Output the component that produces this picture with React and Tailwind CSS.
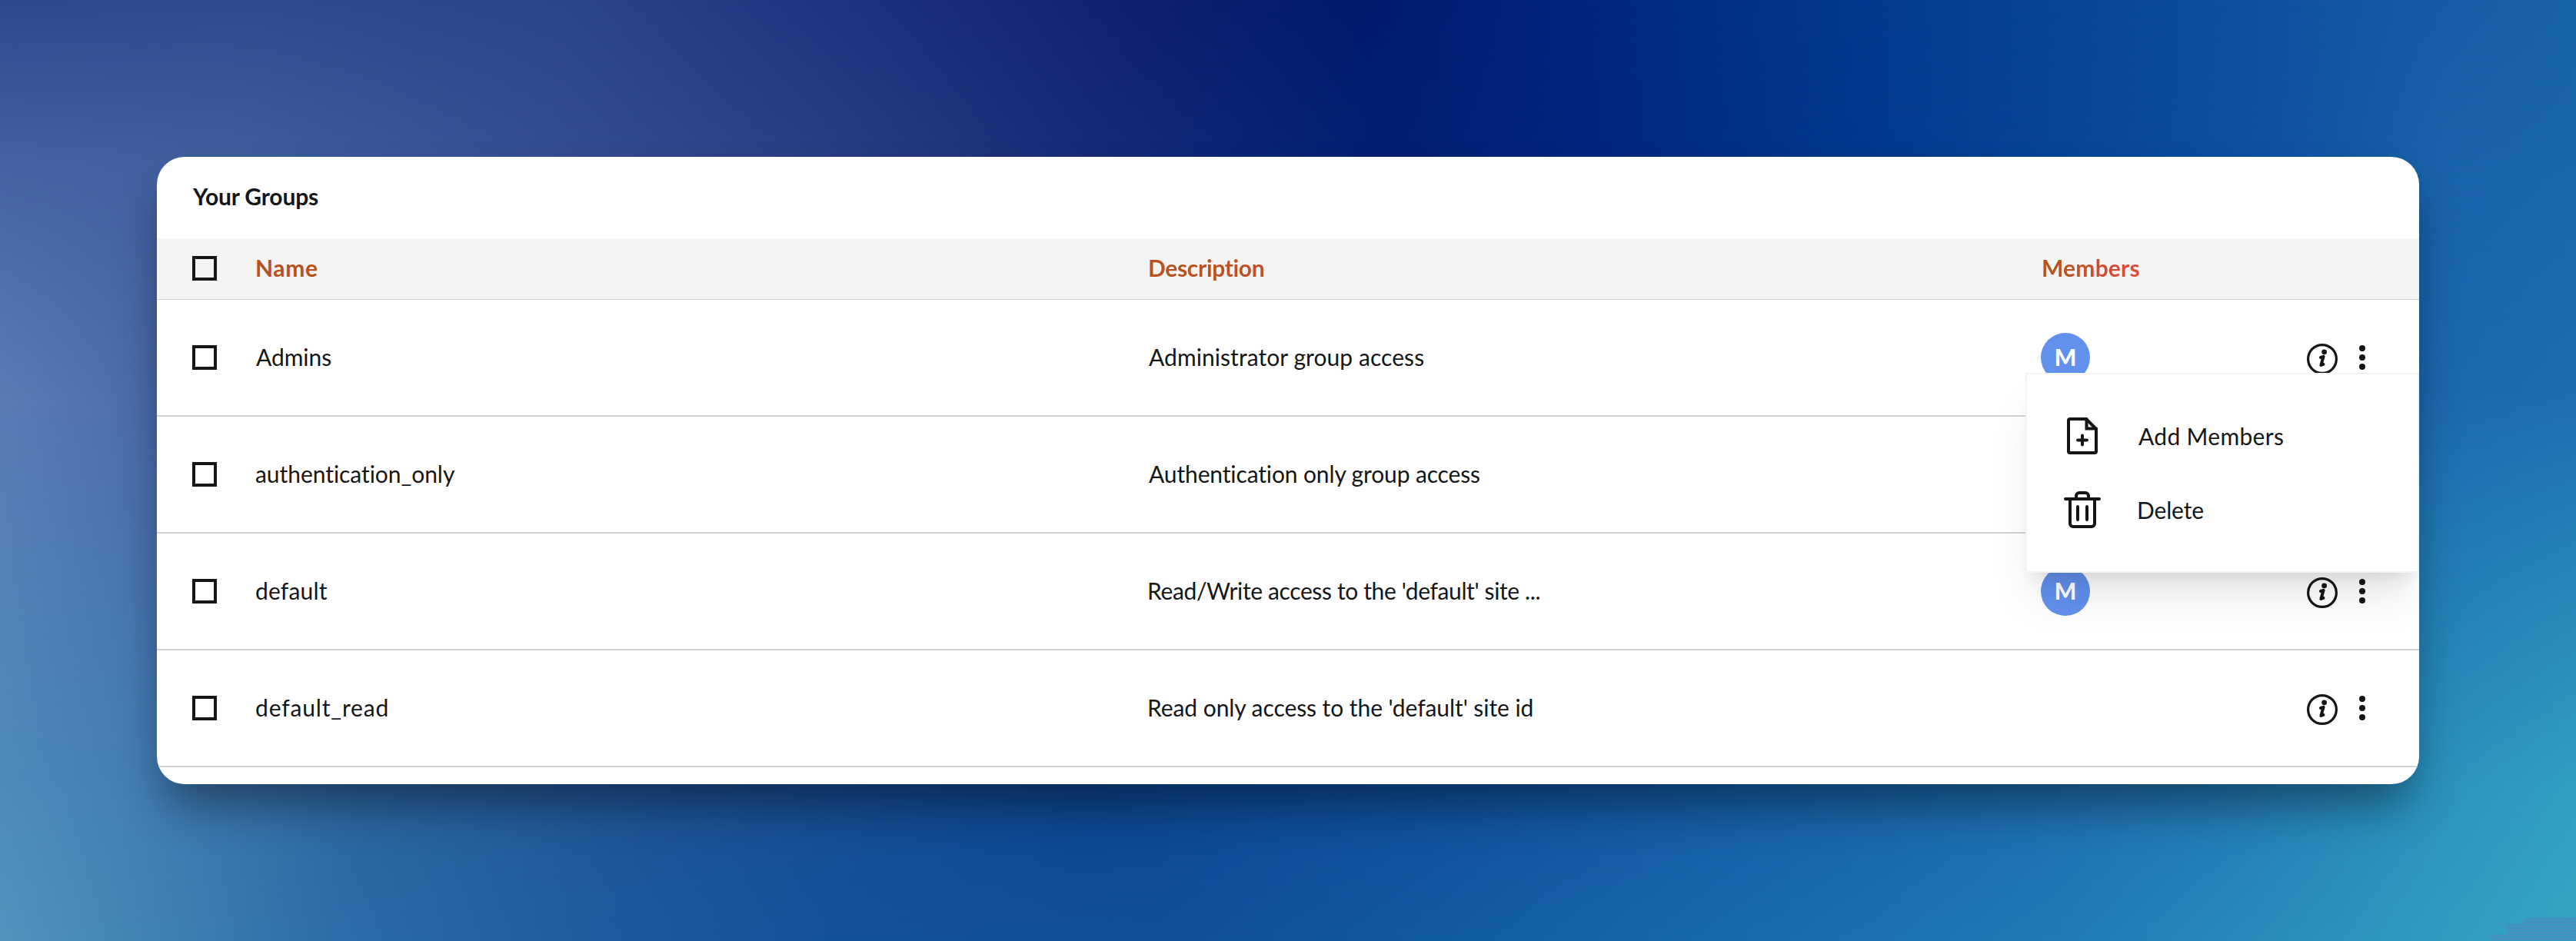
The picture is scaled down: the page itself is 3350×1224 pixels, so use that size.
const GROUPS = [
  { name: "Admins", nameCls: "pl-[2px] tracking-[-0.05px]", desc: "Administrator group access", descCls: "pl-[2px] tracking-[0.07px]", member: "M", actions: true },
  { name: "authentication_only", nameCls: "pl-px tracking-[-0.05px]", desc: "Authentication only group access", descCls: "pl-[2px] tracking-[-0.13px]" },
  { name: "default", nameCls: "pl-px tracking-[0.18px]", desc: "Read/Write access to the 'default' site ...", descCls: "tracking-[-0.37px]", member: "M", actions: true },
  { name: "default_read", nameCls: "pl-px tracking-[0.85px]", desc: "Read only access to the 'default' site id", descCls: "tracking-[-0.07px]", actions: true },
];

const COLS = "grid grid-cols-[81px_1161px_1162px_1fr] items-center pl-[46px]";

function Background() {
  return (
    <div className="absolute inset-0">
      <div className="absolute inset-0 bg-[linear-gradient(90deg,#5294bf_0%,#4589b6_4%,#2c6dab_13%,#1f5d9f_22%,#12519a_33%,#0f4f98_45%,#0f5a9f_54%,#196bae_68%,#217ab6_80%,#2b94c0_91%,#34a8c4_100%)]" />
      <div className="absolute inset-0 bg-[linear-gradient(90deg,#4d8aba_0%,#447fb6_5%,#2b659f_14%,#1d5295_26%,#0c4590_42%,#0f4e9b_55%,#1763a9_72%,#2277b5_86%,#2a91be_94%,#2f9fc3_100%)] [mask-image:linear-gradient(180deg,#000_83%,transparent_100%)]" />
      <div className="absolute inset-0 bg-[linear-gradient(90deg,#5a7cb6_0%,#4a6aa9_6%,#2b4a92_30%,#00237a_54%,#0a4c9c_75%,#1b68ae_94%,#1f6db0_100%)] [mask-image:linear-gradient(180deg,#000_42%,transparent_83%)]" />
      <div className="absolute inset-0 bg-[linear-gradient(90deg,#4461a2_0%,#415e9f_9%,#364f96_20%,#273f86_32%,#172c79_42%,#001f72_54%,#00277f_62%,#023a90_73%,#0d52a1_88%,#1863a9_95%,#1a66ab_100%)] [mask-image:linear-gradient(180deg,#000_16.7%,transparent_42%)]" />
      <div className="absolute inset-0 bg-[linear-gradient(90deg,#2e4890_0%,#2f4a91_10%,#2b448b_22%,#1e3280_33%,#10206e_44%,#001a6c_53%,#00257e_61%,#023a8f_73%,#0b509d_87%,#135aa4_93%,#1763a6_100%)] [mask-image:linear-gradient(180deg,#000_0%,transparent_16.7%)]" />
      <svg viewBox="0 0 116 32" className="absolute right-0 bottom-0 h-8 w-[116px]">
        <defs>
          <pattern id="grain" width="4" height="4" patternUnits="userSpaceOnUse">
            <rect width="4" height="4" fill="#3f9abf" />
            <path d="M0 0h1v1h-1zM2 1h1v1h-1zM1 2h1v2h-1zM3 3h1v1h-1z" fill="#4f7fc8" />
          </pattern>
        </defs>
        <path d="M0 25h8v-2h18v-7h-6v-2h6v-4h-14v-1h34v-4h4v-2h8v-2h58v31H4v-3h6v-2H0z" fill="url(#grain)" />
      </svg>
    </div>
  );
}

function Checkbox() {
  return <div className="size-8 border-4 border-[#161616]" />;
}

function InfoIcon() {
  return (
    <svg viewBox="0 0 40 40" className="size-10" fill="none">
      <circle cx="20" cy="20" r="18.4" stroke="#161616" strokeWidth="3.2" />
      <circle cx="22.6" cy="10.8" r="3.4" fill="#161616" />
      <path d="M18 18 L21.6 16.8 L18.4 28 L21.4 26.8" stroke="#161616" strokeWidth="4" strokeLinecap="round" strokeLinejoin="round" />
    </svg>
  );
}

function Dots() {
  return (
    <div className="flex flex-col gap-1">
      <span className="size-2 rounded-full bg-[#161616]" />
      <span className="size-2 rounded-full bg-[#161616]" />
      <span className="size-2 rounded-full bg-[#161616]" />
    </div>
  );
}

function AddFileIcon() {
  return (
    <svg viewBox="0 0 48 48" className="size-12" fill="none" stroke="#161616" strokeWidth="4" strokeLinecap="round" strokeLinejoin="round">
      <path d="M29 2H8a2 2 0 0 0-2 2v40a2 2 0 0 0 2 2h32a2 2 0 0 0 2-2V15z" />
      <path d="M29.5 2v12.5H42" strokeLinejoin="miter" />
      <path d="M24 23.5v12M18 29.5h12" />
    </svg>
  );
}

function TrashIcon() {
  return (
    <svg viewBox="0 0 48 48" className="size-12" fill="none" stroke="#161616" strokeWidth="4" strokeLinecap="round" strokeLinejoin="round">
      <path d="M2 10h44" />
      <path d="M8 10v32a4 4 0 0 0 4 4h24a4 4 0 0 0 4-4V10" />
      <path d="M16 10V6a4 4 0 0 1 4-4h8a4 4 0 0 1 4 4v4" />
      <path d="M18 20v17M30 20v17" />
    </svg>
  );
}

function Menu() {
  return (
    <div className="absolute top-[281px] right-0 h-[260px] w-[512px] border-2 border-[#f4f4f4] bg-white pt-8 pl-12 shadow-[0_40px_50px_-10px_rgba(0,0,0,0.1),0_16px_20px_-12px_rgba(0,0,0,0.1)]">
      <div className="flex h-24 items-center">
        <AddFileIcon />
        <span className="pb-px pl-[49px] tracking-[0.33px]">Add Members</span>
      </div>
      <div className="flex h-24 items-center">
        <TrashIcon />
        <span className="pb-px pl-[47px] tracking-[-0.15px]">Delete</span>
      </div>
    </div>
  );
}

export default function App() {
  return (
    <div className="relative h-[1224px] w-[3350px] overflow-hidden font-['Lato',sans-serif] text-[30px] leading-10 text-[#161616]">
      <Background />
      <div className="relative px-[204px] pt-[204px]">
        <div className="rounded-[36px] shadow-[0_36px_60px_-10px_rgba(0,0,0,0.42)]">
          <div className="relative h-[816px] overflow-hidden rounded-[36px] bg-white">
            <div className="flex h-[106px] items-center pb-[5px] pl-[47px] font-bold tracking-[-0.15px]">Your Groups</div>
            <div className={`${COLS} h-20 border-b border-[#d1d1d1] bg-[#f4f4f4] pb-px font-bold text-[#b8521c]`}>
              <Checkbox />
              <div className="pb-[3px] pl-px tracking-[0.6px]">Name</div>
              <div className="pb-[3px] pl-px tracking-[-0.32px]">
                <span className="bg-linear-to-r from-[#b6531a] to-[#bf5126] bg-clip-text text-transparent">Description</span>
              </div>
              <div className="pb-[3px] pl-px tracking-[0.2px]">
                <span className="bg-linear-to-r from-[#b3541a] to-[#e0483c] bg-clip-text text-transparent">Members</span>
              </div>
            </div>
            {GROUPS.map((g) => (
              <div key={g.name} className={`${COLS} h-[152px] border-b-2 border-[#d4d4d4]`}>
                <Checkbox />
                <div className={`pb-[3px] ${g.nameCls}`}>{g.name}</div>
                <div className={`pb-[3px] ${g.descCls}`}>{g.desc}</div>
                <div className="flex items-center">
                  <div className="w-[346px]">
                    {g.member && (
                      <div className="flex size-16 items-center justify-center rounded-full bg-[#6190ed] pb-[3px] font-black text-white">{g.member}</div>
                    )}
                  </div>
                  {g.actions && (
                    <div className="flex items-center gap-7">
                      <div className="pt-1"><InfoIcon /></div>
                      <Dots />
                    </div>
                  )}
                </div>
              </div>
            ))}
            <Menu />
          </div>
        </div>
      </div>
    </div>
  );
}
